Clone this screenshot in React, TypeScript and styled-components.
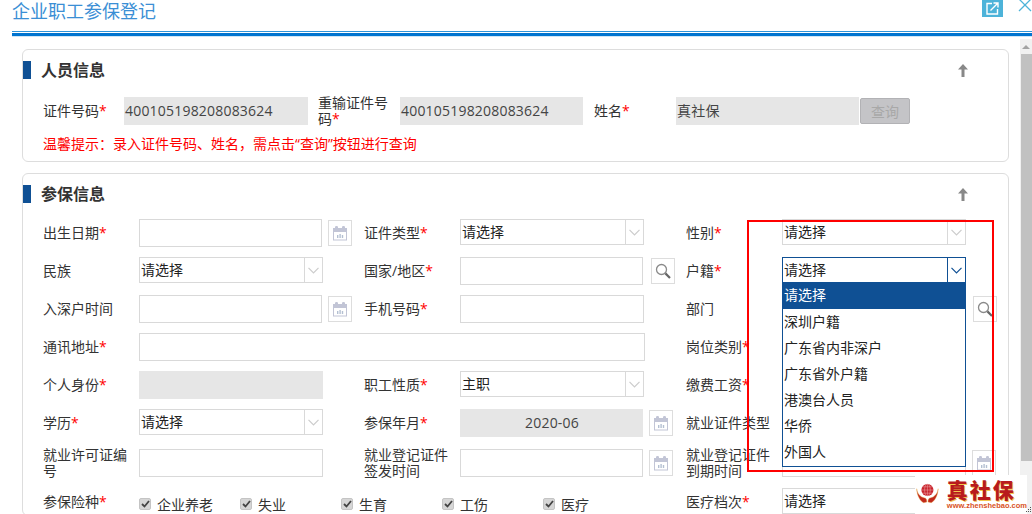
import React from 'react';
import styled, { createGlobalStyle } from 'styled-components';

const GlobalStyle = createGlobalStyle`
  html, body {
    margin: 0;
    padding: 0;
    background: #fff;
    overflow: hidden;
  }
  * {
    box-sizing: border-box;
  }
  body {
    font-family: 'Open Sans', 'Noto Sans CJK SC', sans-serif;
    font-size: 14px;
    color: #333;
  }
`;

const Dialog = styled.div`
  position: relative;
  width: 1032px;
  height: 514px;
  padding-left: 12px;
  overflow: hidden;
  display: flex;
  flex-direction: column;
`;

const DialogHeader = styled.header`
  flex: none;
  height: 31px;
  display: flex;
  justify-content: space-between;
`;

const DialogTitle = styled.h1`
  margin: 0;
  font-size: 18px;
  line-height: 22px;
  font-weight: 400;
  color: #3b8fd5;
`;

const HeaderActions = styled.div`
  display: flex;
  align-items: flex-start;
`;

const PopoutButton = styled.div`
  width: 21px;
  height: 17px;
  background: #4db3d9;
  display: flex;
  align-items: center;
  justify-content: center;
`;

const CloseButton = styled.div`
  width: 14px;
  height: 12px;
  margin-left: 15px;
  display: flex;
`;

const HeaderRule = styled.div`
  flex: none;
  height: 6px;
  border-top: 1px solid #2f93d8;
  border-bottom: 1px solid #cfe6f7;
  background: linear-gradient(#fff 0, #fff 1px, #0074d0 1px, #0074d0 100%);
`;

const Body = styled.div`
  flex: 1;
  min-height: 0;
  display: flex;
`;

const Content = styled.main`
  flex: 1;
  min-width: 0;
  padding: 12px 11px 0 10px;
  display: flex;
  flex-direction: column;
  gap: 11px;
`;

const Scrollbar = styled.div`
  flex: none;
  width: 12px;
  margin-top: 2px;
  background: #f1f1f1;
  display: flex;
  flex-direction: column;
`;

const ScrollArrow = styled.div`
  flex: none;
  height: 15px;
  display: flex;
  align-items: center;
  justify-content: center;
  &::before {
    content: '';
    border-left: 4px solid transparent;
    border-right: 4px solid transparent;
    border-bottom: 4px solid #a3a3a3;
  }
`;

const ScrollThumb = styled.div`
  flex: none;
  height: 407px;
  margin-left: 1px;
  background: #c1c1c1;
`;

const Panel = styled.section<{ $height?: number }>`
  flex: none;
  position: relative;
  height: ${(p) => (p.$height ? `${p.$height}px` : 'auto')};
  border: 1px solid #ddd;
  border-radius: 6px;
  padding-top: 11px;
`;

const PanelHeader = styled.div`
  height: 18px;
  display: flex;
  align-items: center;
  justify-content: space-between;
  padding-right: 40px;
`;

const PanelTitle = styled.h2`
  margin: 0;
  height: 18px;
  border-left: 8px solid #0f5094;
  padding-left: 10px;
  font-size: 16px;
  line-height: 18px;
  font-weight: 700;
  color: #333;
`;

const CollapseIcon = styled.svg`
  width: 10px;
  height: 13px;
  fill: #888;
`;

const QueryGrid = styled.div`
  margin: 18px 0 0 20px;
  display: grid;
  grid-template-columns: 81px 194px 82px 194px 82px 184px 50px;
  grid-template-rows: 28px;
  align-items: center;
`;

const Hint = styled.p`
  margin: 11px 0 0 20px;
  line-height: 16px;
  color: #f00;
`;

const FormGrid = styled.div`
  margin: 16px 0 0 20px;
  display: grid;
  grid-template-columns: 96px 225px 96px 226px 96px 225px;
  grid-template-rows: repeat(6, 28px) 32px 26px;
  row-gap: 10px;
  align-items: center;
`;

const Label = styled.label`
  display: block;
  line-height: 16px;
  color: #333;
  padding-right: 6px;
`;

const Required = styled.span`
  color: #f00;
`;

const Field = styled.div`
  display: flex;
  align-items: center;
  position: relative;
`;

const SpanField = styled(Field)<{ $span: number }>`
  grid-column: span ${(p) => p.$span};
`;

const Input = styled.div<{ $width?: number; $grey?: boolean; $center?: boolean }>`
  flex: none;
  width: ${(p) => p.$width ?? 183}px;
  height: 28px;
  border: ${(p) => (p.$grey ? 'none' : '1px solid #d9d9d9')};
  background: ${(p) => (p.$grey ? '#e6e6e6' : '#fff')};
  line-height: 28px;
  padding-left: 1px;
  letter-spacing: 0.2px;
  color: #444;
  text-align: ${(p) => (p.$center ? 'center' : 'left')};
`;

const SelectBox = styled.div<{ $open?: boolean }>`
  position: relative;
  flex: none;
  width: 184px;
  height: 26px;
  margin-bottom: 2px;
  border: 1px solid ${(p) => (p.$open ? '#0f5094' : '#d9d9d9')};
  line-height: 24px;
  padding-left: 1px;
  color: #222;
  background: #fff;
`;

const SelectToggle = styled.span<{ $open?: boolean }>`
  position: absolute;
  right: 0;
  top: 0;
  bottom: 0;
  width: 18px;
  border-left: 1px solid ${(p) => (p.$open ? '#0f5094' : '#d9d9d9')};
  display: flex;
  align-items: center;
  justify-content: center;
  color: ${(p) => (p.$open ? '#0f5094' : '#ccc')};
`;

const Dropdown = styled.ul`
  position: absolute;
  z-index: 2;
  left: -1px;
  right: -1px;
  top: 24px;
  height: 185px;
  margin: 0;
  padding: 0;
  list-style: none;
  background: #fff;
  border: 1px solid #0f5094;
  border-top: none;
`;

const Option = styled.li<{ $active?: boolean }>`
  height: 26px;
  line-height: 26px;
  padding-left: 1px;
  color: ${(p) => (p.$active ? '#fff' : '#222')};
  background: ${(p) => (p.$active ? '#0f5094' : 'transparent')};
  &:first-child {
    height: 27px;
    margin-bottom: 0;
  }
`;

const AddonBox = styled.div<{ $gap: number }>`
  flex: none;
  width: 24px;
  height: 26px;
  margin-left: ${(p) => p.$gap}px;
  border: 1px solid #ddd;
  display: flex;
  align-items: center;
  justify-content: center;
`;

const QueryButton = styled.button`
  width: 50px;
  height: 26px;
  padding: 0;
  border: 1px solid #b2b2b5;
  border-radius: 2px;
  background: #c4c4c7;
  color: #a8a8a8;
  font: inherit;
`;

const CheckList = styled.div`
  display: flex;
  padding-top: 4px;
`;

const CheckItem = styled.div`
  width: 101px;
  display: flex;
  align-items: center;
  gap: 6px;
  color: #333;
`;

const CheckMark = styled.span`
  width: 12px;
  height: 12px;
  border-radius: 2px;
  background: #d6d6d6;
  border: 1px solid #c4c4c4;
  display: flex;
  align-items: center;
  justify-content: center;
`;

const HighlightBox = styled.div`
  position: absolute;
  z-index: 3;
  left: 747px;
  top: 220px;
  width: 247px;
  height: 252px;
  border: 2px solid #f00;
  pointer-events: none;
`;

const Watermark = styled.div`
  position: absolute;
  z-index: 4;
  left: 915px;
  top: 475px;
  width: 112px;
  height: 39px;
  background: #fff;
  display: flex;
  gap: 8px;
  padding-left: 1px;
`;

const WatermarkText = styled.div`
  display: flex;
  flex-direction: column;
  padding-top: 2px;
`;

const WatermarkName = styled.div`
  font-family: 'Noto Sans CJK SC', sans-serif;
  font-size: 21px;
  line-height: 24px;
  font-weight: 900;
  letter-spacing: 2px;
  color: #b81a1d;
  text-shadow: 1px 1px 0 #f3c64e;
  white-space: nowrap;
`;

const WatermarkUrl = styled.div`
  font-family: 'Liberation Sans', sans-serif;
  font-size: 7.5px;
  line-height: 9px;
  font-weight: 700;
  color: #d9531e;
  white-space: nowrap;
`;

const ResizeGrip = styled.svg`
  position: absolute;
  z-index: 5;
  right: 1px;
  bottom: 2px;
  width: 5px;
  height: 5px;
  fill: #555;
`;

const Chevron = () => (
  <svg width="11" height="7" viewBox="0 0 11 7" fill="none" stroke="currentColor" strokeWidth="1.2">
    <path d="M0.5 0.8 L5.5 5.8 L10.5 0.8" />
  </svg>
);

const Select = ({ value, open, children }: { value: string; open?: boolean; children?: React.ReactNode }) => (
  <SelectBox $open={open}>
    {value}
    <SelectToggle $open={open}>
      <Chevron />
    </SelectToggle>
    {children}
  </SelectBox>
);

const CalendarAddon = ({ gap = 6 }: { gap?: number }) => (
  <AddonBox $gap={gap}>
    <svg width="16" height="16" viewBox="0 0 16 16">
      <path d="M1 3h14v3H1z" fill="#c2c5d6" />
      <rect x="3" y="1" width="3" height="3" rx="1.2" fill="#c2c5d6" />
      <rect x="10" y="1" width="3" height="3" rx="1.2" fill="#c2c5d6" />
      <rect x="1.5" y="6.5" width="13" height="8.5" fill="none" stroke="#c2c5d6" />
      <path d="M5 10h1.4v3H5zM7.4 9h1.4v4H7.4zM9.8 10h1.4v3H9.8z" fill="#b4c0d2" />
    </svg>
  </AddonBox>
);

const SearchAddon = ({ gap = 8 }: { gap?: number }) => (
  <AddonBox $gap={gap}>
    <svg width="16" height="16" viewBox="0 0 16 16" fill="none">
      <circle cx="6.5" cy="6.5" r="5" stroke="#8a8a8a" strokeWidth="1.3" />
      <path d="M10.4 10.4 L15 15" stroke="#666" strokeWidth="2.2" />
    </svg>
  </AddonBox>
);

const Collapse = () => (
  <CollapseIcon viewBox="0 0 10 13">
    <path d="M5 0 L10 5.5 H6.5 V13 H3.5 V5.5 H0 Z" />
  </CollapseIcon>
);

const FieldLabel = ({ text, required }: { text: string; required?: boolean }) => (
  <Label>
    {text}
    {required && <Required>*</Required>}
  </Label>
);

const Logo = () => (
  <svg width="36" height="37" viewBox="0 0 36 37">
    <circle cx="18" cy="13" r="9.5" fill="#c8232c" />
    <g stroke="#f4b8b8" strokeWidth="0.7" fill="none">
      <ellipse cx="18" cy="13" rx="4.5" ry="9.5" />
      <path d="M18 3.5v19M8.5 13h19M10 8h16M10 18h16" />
    </g>
    <path d="M1 11 C2 18 5 21 9 24 L15 26 C17 27 17 30 17 32 L12 33 C7 30 2 24 1 11Z" fill="#c0281c" stroke="#e8a33a" strokeWidth="0.6" />
    <path d="M35 11 C34 18 31 21 27 24 L21 26 C19 27 19 30 19 32 L24 33 C29 30 34 24 35 11Z" fill="#c0281c" stroke="#e8a33a" strokeWidth="0.6" />
  </svg>
);

const huji = ['请选择', '深圳户籍', '广东省内非深户', '广东省外户籍', '港澳台人员', '华侨', '外国人'];
const insurances = ['企业养老', '失业', '生育', '工伤', '医疗'];

const App: React.FunctionComponent = () => {
  return (
    <>
      <GlobalStyle />
      <Dialog>
        <DialogHeader>
          <DialogTitle>企业职工参保登记</DialogTitle>
          <HeaderActions>
            <PopoutButton>
              <svg width="13" height="13" viewBox="0 0 13 13" fill="none" stroke="#fff" strokeWidth="1.4">
                <path d="M6 1.5H1v10.5h10.5V7" />
                <path d="M4.5 8.5 L11.5 1.5 M7.5 1h4.5v4.5" />
              </svg>
            </PopoutButton>
            <CloseButton>
              <svg width="14" height="12" viewBox="0 0 14 12" fill="none" stroke="#4db3d9" strokeWidth="1.3">
                <path d="M1 -1 L13 11 M13 -1 L1 11" />
              </svg>
            </CloseButton>
          </HeaderActions>
        </DialogHeader>
        <HeaderRule />
        <Body>
          <Content>
            <Panel $height={113}>
              <PanelHeader>
                <PanelTitle>人员信息</PanelTitle>
                <Collapse />
              </PanelHeader>
              <QueryGrid>
                <FieldLabel text="证件号码" required />
                <Field>
                  <Input $grey $width={184}>400105198208083624</Input>
                </Field>
                <FieldLabel text="重输证件号码" required />
                <Field>
                  <Input $grey>400105198208083624</Input>
                </Field>
                <FieldLabel text="姓名" required />
                <Field>
                  <Input $grey $width={183}>真社保</Input>
                </Field>
                <QueryButton disabled>查询</QueryButton>
              </QueryGrid>
              <Hint>温馨提示：录入证件号码、姓名，需点击“查询”按钮进行查询</Hint>
            </Panel>
            <Panel>
              <PanelHeader>
                <PanelTitle>参保信息</PanelTitle>
                <Collapse />
              </PanelHeader>
              <FormGrid>
                <FieldLabel text="出生日期" required />
                <Field>
                  <Input />
                  <CalendarAddon />
                </Field>
                <FieldLabel text="证件类型" required />
                <Field>
                  <Select value="请选择" />
                </Field>
                <FieldLabel text="性别" required />
                <Field>
                  <Select value="请选择" />
                </Field>

                <FieldLabel text="民族" />
                <Field>
                  <Select value="请选择" />
                </Field>
                <FieldLabel text="国家/地区" required />
                <Field>
                  <Input />
                  <SearchAddon />
                </Field>
                <FieldLabel text="户籍" required />
                <Field>
                  <Select value="请选择" open>
                    <Dropdown>
                      {huji.map((item, i) => (
                        <Option key={item} $active={i === 0}>
                          {item}
                        </Option>
                      ))}
                    </Dropdown>
                  </Select>
                </Field>

                <FieldLabel text="入深户时间" />
                <Field>
                  <Input />
                  <CalendarAddon />
                </Field>
                <FieldLabel text="手机号码" required />
                <Field>
                  <Input $width={184} />
                </Field>
                <FieldLabel text="部门" />
                <Field>
                  <Input $width={184} />
                  <SearchAddon gap={7} />
                </Field>

                <FieldLabel text="通讯地址" required />
                <SpanField $span={3}>
                  <Input $width={506} />
                </SpanField>
                <FieldLabel text="岗位类别" required />
                <Field>
                  <Input $width={184} />
                </Field>

                <FieldLabel text="个人身份" required />
                <Field>
                  <Input $grey $width={184} />
                </Field>
                <FieldLabel text="职工性质" required />
                <Field>
                  <Select value="主职" />
                </Field>
                <FieldLabel text="缴费工资" required />
                <Field>
                  <Input $width={184} />
                </Field>

                <FieldLabel text="学历" required />
                <Field>
                  <Select value="请选择" />
                </Field>
                <FieldLabel text="参保年月" required />
                <Field>
                  <Input $grey $center>2020-06</Input>
                  <CalendarAddon />
                </Field>
                <FieldLabel text="就业证件类型" />
                <Field>
                  <Select value="请选择" />
                </Field>

                <FieldLabel text="就业许可证编号" />
                <Field>
                  <Input $width={184} />
                </Field>
                <FieldLabel text="就业登记证件签发时间" />
                <Field>
                  <Input />
                  <CalendarAddon />
                </Field>
                <FieldLabel text="就业登记证件到期时间" />
                <Field>
                  <Input $width={184} />
                  <CalendarAddon />
                </Field>

                <FieldLabel text="参保险种" required />
                <SpanField $span={3}>
                  <CheckList>
                    {insurances.map((item) => (
                      <CheckItem key={item}>
                        <CheckMark>
                          <svg width="9" height="8" viewBox="0 0 9 8" fill="none" stroke="#444" strokeWidth="1.8">
                            <path d="M1 4 L3.5 6.5 L8 1" />
                          </svg>
                        </CheckMark>
                        {item}
                      </CheckItem>
                    ))}
                  </CheckList>
                </SpanField>
                <FieldLabel text="医疗档次" required />
                <Field>
                  <Select value="请选择" />
                </Field>
              </FormGrid>
            </Panel>
          </Content>
          <Scrollbar>
            <ScrollArrow />
            <ScrollThumb />
          </Scrollbar>
        </Body>
        <HighlightBox />
        <Watermark>
          <Logo />
          <WatermarkText>
            <WatermarkName>真社保</WatermarkName>
            <WatermarkUrl>www.zhenshebao.com</WatermarkUrl>
          </WatermarkText>
        </Watermark>
        <ResizeGrip viewBox="0 0 5 5">
          <path d="M4 0h1v1H4zM2 2h1v1H2zM4 2h1v1H4zM0 4h1v1H0zM2 4h1v1H2zM4 4h1v1H4z" />
        </ResizeGrip>
      </Dialog>
    </>
  );
};

export default App;
